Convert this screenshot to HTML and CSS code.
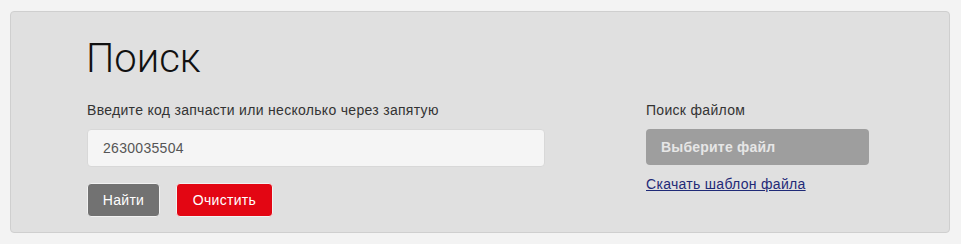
FILE: index.html
```html
<!DOCTYPE html>
<html lang="ru">
<head>
    <meta charset="UTF-8">
    <meta name="viewport" content="width=device-width, initial-scale=1.0">
    <title>Поиск</title>
    <link rel="stylesheet" href="styles.css">
</head>
<body>
    <div class="panel">
        <h1 class="title">Поиск</h1>
        <div class="layout">
            <div class="code-search">
                <label class="field-label" for="code">Введите код запчасти или несколько через запятую</label>
                <input id="code" class="code-input" type="text" value="2630035504">
                <div class="buttons">
                    <button class="btn btn-find">Найти</button>
                    <button class="btn btn-clear">Очистить</button>
                </div>
            </div>
            <div class="file-search">
                <div class="field-label">Поиск файлом</div>
                <button class="file-btn">Выберите файл</button>
                <a class="template-link" href="#">Скачать шаблон файла</a>
            </div>
        </div>
    </div>
</body>
</html>
```

FILE: styles.css
```css
body {
    font-family: "Liberation Sans", Arial, sans-serif;
    background-color: #f3f3f3;
    margin: 0;
    padding: 11px 11px 0 10px;
    color: #333;
}

.panel {
    background: #e0e0e0;
    border: 1px solid #cfcfcf;
    border-radius: 4px;
    height: 220px;
    padding: 0 0 0 76px;
}

.title {
    font-family: Roboto, "Liberation Sans", sans-serif;
    font-weight: 300;
    font-size: 40px;
    color: #111;
    margin: 24px 0 0 -1px;
    line-height: 46px;
}

.layout {
    display: flex;
    gap: 101px;
    margin-top: 20px;
}

.code-search {
    width: 458px;
    display: flex;
    flex-direction: column;
}

.file-search {
    width: 223px;
    display: flex;
    flex-direction: column;
    align-items: flex-start;
}

.field-label {
    font-size: 14px;
    line-height: 16px;
    letter-spacing: 0.3px;
    color: #333;
    margin-bottom: 11px;
}

.code-input {
    box-sizing: border-box;
    height: 38px;
    width: 458px;
    border: 1px solid #d8d8d8;
    border-radius: 4px;
    background: #f5f5f5;
    padding: 0 15px;
    font-family: "Liberation Sans", Arial, sans-serif;
    font-size: 14px;
    letter-spacing: 0.3px;
    color: #555;
    outline: none;
}

.buttons {
    display: flex;
    gap: 16px;
    margin-top: 16px;
}

.btn {
    box-sizing: border-box;
    height: 34px;
    border: 1px solid #f2f2f2;
    border-radius: 4px;
    color: #fff;
    font-family: "Liberation Sans", Arial, sans-serif;
    font-size: 14px;
    letter-spacing: 0.3px;
    padding: 0 10px;
}

.btn-find {
    background: #727272;
    width: 73px;
}

.btn-clear {
    background: #e30613;
    width: 97px;
}

.file-btn {
    box-sizing: border-box;
    width: 223px;
    height: 36px;
    border: none;
    border-radius: 4px;
    background: #9e9e9e;
    color: #e6e6e6;
    font-family: "Liberation Sans", Arial, sans-serif;
    font-weight: bold;
    font-size: 14px;
    letter-spacing: 0.2px;
    text-align: left;
    padding: 0 15px;
}

.template-link {
    margin-top: 11px;
    font-size: 14px;
    letter-spacing: 0.3px;
    color: #1f2a77;
}
```
